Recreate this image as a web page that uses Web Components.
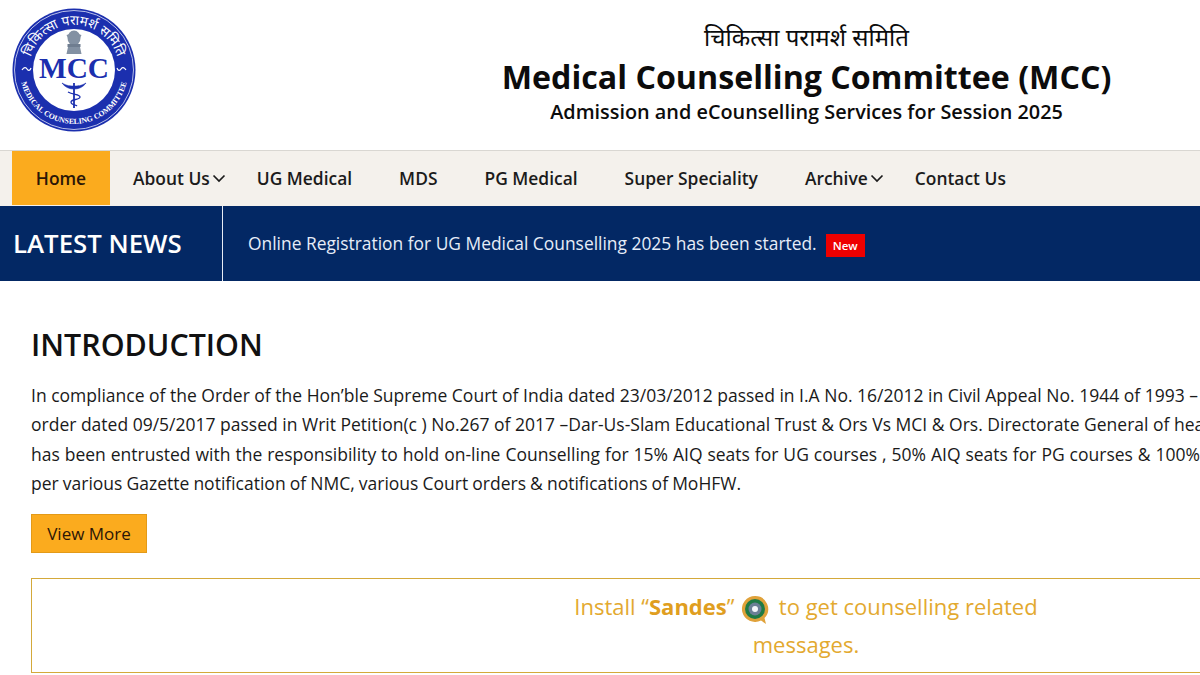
<!DOCTYPE html>
<html lang="en">
<head>
<meta charset="utf-8">
<title>MCC</title>
<style>
  html, body { margin: 0; padding: 0; width: 1200px; height: 675px; overflow: hidden; background: #fff; }
  body { font-family: "Open Sans", "Noto Sans", sans-serif; color: #111; }
</style>
</head>
<body>
<mcc-header>
  <span slot="hindi">चिकित्सा परामर्श समिति</span>
  <span slot="title">Medical Counselling Committee (MCC)</span>
  <span slot="sub">Admission and eCounselling Services for Session 2025</span>
</mcc-header>
<mcc-nav></mcc-nav>
<mcc-news>Online Registration for UG Medical Counselling 2025 has been started.</mcc-news>
<mcc-intro></mcc-intro>

<script>
const headerTemplate = document.createElement('template');
headerTemplate.innerHTML = `
  <style>
  :host {
    display: flex;
    height: 150px;
    box-sizing: border-box;
    padding: 8px 0 0 12px;
    background: #fff;
  }
  .logo { width: 124px; height: 124px; flex: none; overflow: visible; }
  .titles {
    margin-left: 366px;
    width: 609px;
    display: flex;
    flex-direction: column;
    align-items: center;
    white-space: nowrap;
    color: #0c0c0c;
  }
  .hindi { font-family: "Noto Sans", "Noto Sans Devanagari", "Lohit Devanagari", sans-serif; font-size: 24px; line-height: 34px; margin-top: 12px; }
  .title { font-size: 32.2px; line-height: 44px; font-weight: 700; margin-top: 1px; }
  .sub { font-size: 19.85px; line-height: 27px; font-weight: 600; margin-top: -1px; }
  </style>
  <svg class="logo" viewBox="0 0 124 124" aria-hidden="true">
    <defs>
      <path id="arcTop" d="M 17.7 69.800 A 45 45 0 1 1 106.300 69.800"/>
      <path id="arcBottom" d="M 8.800 52.600 A 54 54 0 1 0 115.200 52.600"/>
    </defs>
    <circle cx="62" cy="62" r="61.500" fill="#1b2fae"/>
    <circle cx="62" cy="62" r="59.500" fill="none" stroke="#dfe3f7" stroke-width="0.8"/>
    <circle cx="62" cy="62" r="41" fill="#fff"/>
    <text font-family="Noto Sans, sans-serif" font-size="13.500" fill="#fff" text-anchor="middle"><textPath href="#arcTop" startOffset="50%">चिकित्सा परामर्श समिति</textPath></text>
    <text font-family="Liberation Serif, serif" font-size="7.800" font-weight="700" fill="#fff" text-anchor="middle"><textPath href="#arcBottom" startOffset="50%">MEDICAL COUNSELING COMMITTEE</textPath></text>
    <!-- emblem -->
    <g fill="#8391a3">
      <ellipse cx="62" cy="30" rx="6.500" ry="7.500"/>
      <rect x="55.500" y="36" width="13" height="3" fill="#6f7d90"/>
      <path d="M56 39h12l1.500 7h-15z"/>
      <path d="M56 30l-1.500-3 3.500-1zM68 30l1.500-3-3.500-1z"/>
    </g>
    <text x="62" y="70" font-family="Liberation Serif, serif" font-size="30" font-weight="700" fill="#1b2fae" text-anchor="middle" textLength="70" lengthAdjust="spacingAndGlyphs">MCC</text>
    <!-- caduceus -->
    <g fill="none" stroke="#1b2fae">
      <path d="M62 75v25" stroke-width="1.800"/>
      <path d="M50 75c5 3 8 3 12 3s7 0 12-3c-3 4-7 6-12 6s-9-2-12-6z" fill="#1b2fae" stroke-width="0.600"/>
      <path d="M56 84c5 3 12 2 12 5s-9 2-9 5 5 3 6 4" stroke-width="1.300"/>
    </g>
    <!-- side ornaments -->
    <path d="M10 62c2-3 4-3 5-1s3 2 4-1M105 60c1 3 3 3 4 1s3-2 5 1" fill="none" stroke="#fff" stroke-width="1.200"/>
  </svg>
  <div class="titles">
    <div class="hindi"><slot name="hindi"></slot></div>
    <div class="title"><slot name="title"></slot></div>
    <div class="sub"><slot name="sub"></slot></div>
  </div>
`;

class McCHeader extends HTMLElement {
  constructor() {
    super();
    const shadow = this.attachShadow({ mode: 'open' });
    shadow.appendChild(headerTemplate.content.cloneNode(true));
  }
}
customElements.define('mcc-header', McCHeader);

const navTemplate = document.createElement('template');
navTemplate.innerHTML = `
  <style>
  :host {
    display: flex;
    height: 56px;
    box-sizing: border-box;
    border-top: 1px solid #d9d7d2;
    background: #f4f1ec;
    padding: 0 0 1px 12px;
    font-size: 17.4px;
    font-weight: 600;
    color: #1b1b1b;
  }
  .item {
    display: flex;
    align-items: center;
    white-space: nowrap;
    margin-right: 47px;
  }
  .home {
    width: 98px;
    justify-content: center;
    background: #fbab1e;
    color: #2b1606;
    margin-right: 23px;
  }
  svg { width: 14px; height: 9px; margin-left: 2px; margin-top: 1px; }
  </style>
`;

const navItems = [
  { label: 'Home', home: true },
  { label: 'About Us', caret: true },
  { label: 'UG Medical' },
  { label: 'MDS' },
  { label: 'PG Medical' },
  { label: 'Super Speciality' },
  { label: 'Archive', caret: true },
  { label: 'Contact Us' }
];

class McCNav extends HTMLElement {
  constructor() {
    super();
    const shadow = this.attachShadow({ mode: 'open' });
    shadow.appendChild(navTemplate.content.cloneNode(true));
    navItems.forEach(item => {
      const el = document.createElement('div');
      el.className = item.home ? 'item home' : 'item';
      el.textContent = item.label;
      if (item.caret) {
        el.insertAdjacentHTML('beforeend', '<svg viewBox="0 0 14 9"><path d="M1.500 1.500 7 7l5.500-5.500" fill="none" stroke="#1b1b1b" stroke-width="1.700"/></svg>');
        el.style.marginRight = '31px';
      }
      shadow.appendChild(el);
    });
  }
}
customElements.define('mcc-nav', McCNav);

const newsTemplate = document.createElement('template');
newsTemplate.innerHTML = `
  <style>
  :host {
    display: flex;
    height: 75px;
    background: #032864;
    color: #fff;
  }
  .label {
    width: 223px;
    box-sizing: border-box;
    padding-left: 13px;
    border-right: 1px solid #e8edf5;
    font-size: 25.8px;
    font-weight: 600;
    line-height: 75px;
    white-space: nowrap;
  }
  .ticker {
    display: flex;
    align-items: center;
    padding: 0 0 2px 25px;
    font-size: 17.4px;
    color: #e6edf8;
    white-space: nowrap;
  }
  .badge {
    margin: 6px 0 0 9px;
    width: 39px;
    height: 23px;
    background: #ee0000;
    color: #fff;
    font-size: 11.5px;
    font-weight: 600;
    line-height: 23px;
    text-align: center;
  }
  </style>
  <div class="label">LATEST NEWS</div>
  <div class="ticker"><slot></slot><span class="badge">New</span></div>
`;

class McCNews extends HTMLElement {
  constructor() {
    super();
    const shadow = this.attachShadow({ mode: 'open' });
    shadow.appendChild(newsTemplate.content.cloneNode(true));
  }
}
customElements.define('mcc-news', McCNews);

const introTemplate = document.createElement('template');
introTemplate.innerHTML = `
  <style>
  :host {
    display: block;
    padding: 42px 0 0 31px;
    overflow: hidden;
    color: #1a1a1a;
  }
  h2 {
    margin: 0;
    font-size: 30.4px;
    line-height: 44px;
    font-weight: 600;
    color: #111;
  }
  p {
    margin: 14px 0 0;
    font-size: 17.5px;
    line-height: 29.4px;
    white-space: nowrap;
  }
  .line3 { word-spacing: 0.4px; }
  .line4 { word-spacing: -0.45px; }
  .btn {
    display: block;
    box-sizing: border-box;
    width: 116px;
    height: 39px;
    margin-top: 15px;
    background: #fbab1e;
    border: 1px solid #e39a18;
    color: #2b1606;
    font-size: 17px;
    line-height: 37px;
    text-align: center;
  }
  .notice {
    box-sizing: border-box;
    width: 1550px;
    height: 95px;
    margin-top: 25px;
    padding-top: 8px;
    border: 1px solid #d4a93a;
    color: #e3a92f;
    font-size: 22px;
    line-height: 38px;
    text-align: center;
  }
  .notice div { width: 500px; margin: 0 auto; }
  .notice b { font-weight: 700; color: #e09e20; }
  .notice svg { width: 28px; height: 30px; vertical-align: -10px; margin: 0 4px 0 1px; }
  </style>
  <h2>INTRODUCTION</h2>
  <p>In compliance of the Order of the Hon’ble Supreme Court of India dated 23/03/2012 passed in I.A No. 16/2012 in Civil Appeal No. 1944 of 1993 –<br>
  order dated 09/5/2017 passed in Writ Petition(c ) No.267 of 2017 –Dar-Us-Slam Educational Trust &amp; Ors Vs MCI &amp; Ors. Directorate General of health<br>
  <span class="line3">has been entrusted with the responsibility to hold on-line Counselling for 15% AIQ seats for UG courses , 50% AIQ seats for PG courses &amp; 100%</span><br>
  <span class="line4">per various Gazette notification of NMC, various Court orders &amp; notifications of MoHFW.</span></p>
  <div class="btn">View More</div>
  <div class="notice"><div>Install “<b>Sandes</b>”
    <svg viewBox="0 0 28 30" aria-hidden="true">
      <path d="M14 1a13 13 0 1 0 6 24.500l5 3.500-1.500-6A13 13 0 0 0 14 1z" fill="#e0a23a"/>
      <circle cx="14" cy="14" r="10" fill="#1f7a45"/>
      <circle cx="14" cy="14" r="6.500" fill="#6b7f96"/>
      <circle cx="14" cy="14" r="3" fill="#f4f6fa"/>
    </svg>
    to get counselling related messages.</div></div>
`;

class McCIntro extends HTMLElement {
  constructor() {
    super();
    const shadow = this.attachShadow({ mode: 'open' });
    shadow.appendChild(introTemplate.content.cloneNode(true));
  }
}
customElements.define('mcc-intro', McCIntro);
</script>
</body>
</html>
